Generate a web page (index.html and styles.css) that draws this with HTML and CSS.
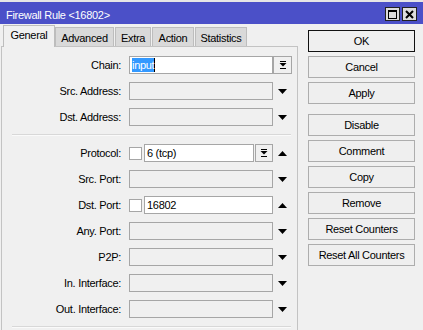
FILE: index.html
```html
<!DOCTYPE html>
<html lang="en">
<head>
<meta charset="UTF-8" />
<title>Firewall Rule &lt;16802&gt;</title>
<link rel="stylesheet" href="styles.css">
</head>
<body>

<div class="window">
  <div class="titlebar">
    <span class="title">Firewall Rule &lt;16802&gt;</span>
    <div class="tb-btns">
      <span class="tb-btn">
        <svg width="9" height="9" viewBox="0 0 9 9"><path d="M0 0h9v9h-9z M1 2v6h7v-6z" fill="#000" fill-rule="evenodd"/></svg>
      </span>
      <span class="tb-btn">
        <svg width="9" height="9" viewBox="0 0 9 9"><path d="M1 1L8 8M8 1L1 8" stroke="#000" stroke-width="2"/></svg>
      </span>
    </div>
  </div>

  <div class="content">
    <div class="left">
      <div class="tabs">
        <div class="tab active w-general">General</div>
        <div class="tab w-advanced">Advanced</div>
        <div class="tab w-extra">Extra</div>
        <div class="tab w-action">Action</div>
        <div class="tab w-stats">Statistics</div>
      </div>

      <div class="panel">
        <div class="row">
          <div class="label">Chain:</div>
          <div class="ctl">
            <div class="field white"><span class="sel">input</span></div>
          </div>
          <div class="dd">
            <svg width="8" height="8" viewBox="0 0 8 8"><rect x="1" y="0" width="6" height="1"/><path d="M0.5 2h7L4 5.5z"/><rect x="1" y="7" width="6" height="1"/></svg>
          </div>
        </div>
        <div class="row">
          <div class="label">Src. Address:</div>
          <div class="ctl"><div class="field"></div></div>
          <div class="arrow"><svg width="9" height="5" viewBox="0 0 9 5"><path d="M0 0h9L4.5 5z"/></svg></div>
        </div>
        <div class="row">
          <div class="label">Dst. Address:</div>
          <div class="ctl"><div class="field"></div></div>
          <div class="arrow"><svg width="9" height="5" viewBox="0 0 9 5"><path d="M0 0h9L4.5 5z"/></svg></div>
        </div>

        <div class="sep"></div>

        <div class="row">
          <div class="label">Protocol:</div>
          <div class="ctl">
            <span class="check"></span>
            <div class="field white">6 (tcp)</div>
            <div class="dd small">
              <svg width="8" height="8" viewBox="0 0 8 8"><rect x="1" y="0" width="6" height="1"/><path d="M0.5 2h7L4 5.5z"/><rect x="1" y="7" width="6" height="1"/></svg>
            </div>
          </div>
          <div class="arrow"><svg width="9" height="5" viewBox="0 0 9 5"><path d="M0 5h9L4.5 0z"/></svg></div>
        </div>
        <div class="row">
          <div class="label">Src. Port:</div>
          <div class="ctl"><div class="field"></div></div>
          <div class="arrow"><svg width="9" height="5" viewBox="0 0 9 5"><path d="M0 0h9L4.5 5z"/></svg></div>
        </div>
        <div class="row">
          <div class="label">Dst. Port:</div>
          <div class="ctl">
            <span class="check"></span>
            <div class="field white">16802</div>
          </div>
          <div class="arrow"><svg width="9" height="5" viewBox="0 0 9 5"><path d="M0 5h9L4.5 0z"/></svg></div>
        </div>
        <div class="row">
          <div class="label">Any. Port:</div>
          <div class="ctl"><div class="field"></div></div>
          <div class="arrow"><svg width="9" height="5" viewBox="0 0 9 5"><path d="M0 0h9L4.5 5z"/></svg></div>
        </div>
        <div class="row">
          <div class="label">P2P:</div>
          <div class="ctl"><div class="field"></div></div>
          <div class="arrow"><svg width="9" height="5" viewBox="0 0 9 5"><path d="M0 0h9L4.5 5z"/></svg></div>
        </div>
        <div class="row">
          <div class="label">In. Interface:</div>
          <div class="ctl"><div class="field"></div></div>
          <div class="arrow"><svg width="9" height="5" viewBox="0 0 9 5"><path d="M0 0h9L4.5 5z"/></svg></div>
        </div>
        <div class="row">
          <div class="label">Out. Interface:</div>
          <div class="ctl"><div class="field"></div></div>
          <div class="arrow"><svg width="9" height="5" viewBox="0 0 9 5"><path d="M0 0h9L4.5 5z"/></svg></div>
        </div>

        <div class="sep"></div>
      </div>
    </div>

    <div class="side">
      <button class="btn default">OK</button>
      <button class="btn">Cancel</button>
      <button class="btn">Apply</button>
      <button class="btn spaced">Disable</button>
      <button class="btn">Comment</button>
      <button class="btn">Copy</button>
      <button class="btn">Remove</button>
      <button class="btn">Reset Counters</button>
      <button class="btn">Reset All Counters</button>
    </div>
  </div>
</div>

</body>
</html>
```

FILE: styles.css
```css
* {
  box-sizing: border-box;
}

body {
  margin: 0;
  font-family: "Liberation Sans", Arial, sans-serif;
  font-size: 11px;
  letter-spacing: -0.3px;
  color: #000;
  background: #f0f0f0;
}

.window {
  width: 423px;
  height: 330px;
  overflow: hidden;
  background: #f0f0f0;
}

/* Title bar */
.titlebar {
  height: 24px;
  border-top: 2px solid #e6e6e6;
  padding: 2px 6px 0 6px;
  background: #4b50c8;
  display: flex;
  align-items: center;
  justify-content: space-between;
}

.title {
  color: #fff;
  margin-top: 2px;
}

.tb-btns {
  display: flex;
  gap: 2px;
}

.tb-btn {
  width: 15px;
  height: 14px;
  background: #dcdcdc;
  border: 1px solid #222;
  display: flex;
  align-items: center;
  justify-content: center;
}

/* Layout */
.content {
  display: flex;
}

.left {
  width: 298px;
  padding-left: 1px;
}

.side {
  width: 107px;
  margin-left: 10px;
  padding-top: 6px;
  display: flex;
  flex-direction: column;
  gap: 4px;
}

/* Tabs */
.tabs {
  height: 22px;
  padding-left: 2px;
  display: flex;
  align-items: flex-end;
}

.tab {
  height: 19px;
  padding-top: 4px;
  line-height: 13px;
  text-align: center;
  background: #d9d9d9;
  border: 1px solid #bdbdbd;
  border-bottom: none;
  margin-right: 1px;
}

.tab.active {
  height: 22px;
  padding-top: 3px;
  margin-bottom: -1px;
  margin-right: 0;
  background: #f0f0f0;
  position: relative;
}

.w-general { width: 52px; }
.w-advanced { width: 59px; }
.w-extra { width: 36px; }
.w-action { width: 42px; }
.w-stats { width: 52px; }

/* Panel */
.panel {
  width: 297px;
  height: 290px;
  border: 1px solid #c3c3c3;
  border-bottom: none;
  padding-top: 9px;
  display: flex;
  flex-direction: column;
  gap: 8px;
}

.row {
  display: flex;
  align-items: center;
  height: 18px;
}

.label {
  width: 120px;
  padding-right: 1px;
  margin-right: 7px;
  text-align: right;
  white-space: nowrap;
}

.ctl {
  width: 144px;
  height: 18px;
  display: flex;
  align-items: center;
}

.field {
  flex: 1;
  height: 18px;
  border: 1px solid #a6a6a6;
  background: #f0f0f0;
  padding: 0 2px;
  display: flex;
  align-items: center;
}

.field.white {
  background: #fff;
}

.sel {
  background: #3399ff;
  color: #fff;
  line-height: 14px;
  border-right: 1px solid #000;
}

.check {
  width: 13px;
  height: 13px;
  border: 1px solid #a6a6a6;
  background: #fff;
  margin-right: 2px;
  flex-shrink: 0;
}

.dd {
  width: 19px;
  height: 18px;
  border: 1px solid #a6a6a6;
  background: #f0f0f0;
  display: flex;
  align-items: center;
  justify-content: center;
}

.dd.small {
  width: 18px;
  margin-left: 1px;
  flex-shrink: 0;
}

.arrow {
  width: 19px;
  height: 18px;
  display: flex;
  align-items: center;
  justify-content: center;
}

.sep {
  height: 2px;
  margin: 0 6px 0 10px;
  border-top: 1px solid #d8d8d8;
  border-bottom: 1px solid #fafafa;
}

/* Buttons */
.btn {
  height: 22px;
  padding: 0;
  font-family: inherit;
  font-size: 11px;
  letter-spacing: -0.3px;
  color: #000;
  background: #efefef;
  border: 1px solid #adadad;
  text-align: center;
}

.btn.default {
  border-color: #111;
}

.btn.spaced {
  margin-top: 6px;
}
```
